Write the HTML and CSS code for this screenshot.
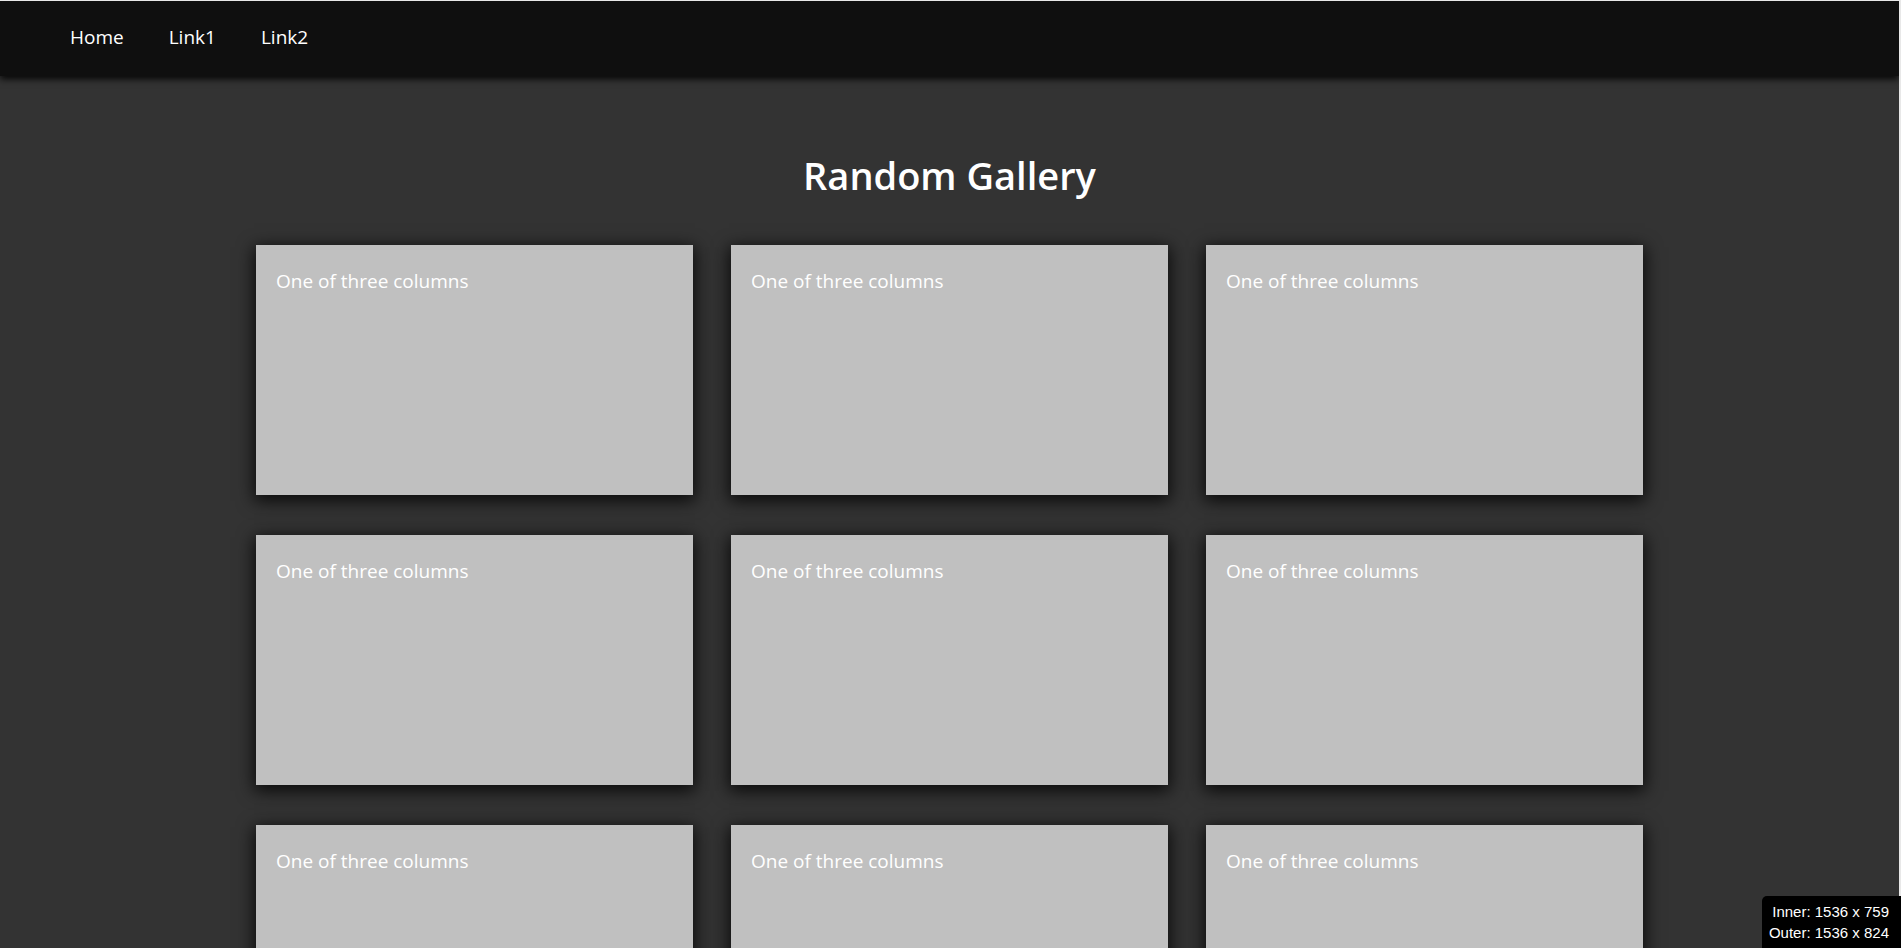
FILE: index.html
```html
<!DOCTYPE html>
<html lang="en">
<head>
<meta charset="utf-8">
<title>Random Gallery</title>
<link rel="stylesheet" href="styles.css">
</head>
<body>
<nav class="navbar">
  <a class="nav-link" href="#">Home</a>
  <a class="nav-link" href="#">Link1</a>
  <a class="nav-link" href="#">Link2</a>
</nav>
<main class="content">
  <h1 class="title">Random Gallery</h1>
  <div class="gallery">
    <div class="card">One of three columns</div>
    <div class="card">One of three columns</div>
    <div class="card">One of three columns</div>
    <div class="card">One of three columns</div>
    <div class="card">One of three columns</div>
    <div class="card">One of three columns</div>
    <div class="card">One of three columns</div>
    <div class="card">One of three columns</div>
    <div class="card">One of three columns</div>
  </div>
</main>
<div class="size-badge">
  <div>Inner: 1536 x 759</div>
  <div>Outer: 1536 x 824</div>
</div>
</body>
</html>
```
FILE: styles.css
```css
html {
  background: #e8e8e8;
  height: 100%;
  overflow: hidden;
}
body {
  margin: 1px 2px 0 0;
  min-height: calc(100% - 1px);
  background: #333333;
  font-family: "Open Sans", "Noto Sans", sans-serif;
  color: #ffffff;
}
.navbar {
  height: 75px;
  background: #0f0f0f;
  display: flex;
  align-items: center;
  padding-left: 47px;
  box-shadow: 0 3px 7px rgba(0, 0, 0, 0.9);
  position: relative;
  z-index: 2;
}
.nav-link {
  color: #ffffff;
  text-decoration: none;
  font-size: 19px;
  padding: 0 22px 0 23px;
  line-height: 26px;
  margin-top: -4px;
}
.content {
  padding-top: 72px;
}
.title {
  margin: 0 0 43px;
  text-align: center;
  font-size: 38px;
  font-weight: 600;
  line-height: 54px;
}
.gallery {
  display: grid;
  grid-template-columns: repeat(3, 437px);
  column-gap: 38px;
  row-gap: 40px;
  justify-content: center;
}
.card {
  height: 250px;
  box-sizing: border-box;
  background: #c0c0c0;
  padding: 23px 20px 20px;
  font-size: 19px;
  line-height: 26px;
  box-shadow: 0 4px 16px 2px rgba(0, 0, 0, 0.8);
}
.size-badge {
  position: fixed;
  right: 0;
  bottom: 0;
  width: 139px;
  box-sizing: border-box;
  background: #000000;
  color: #ffffff;
  border-top-left-radius: 5px;
  font-family: "Liberation Sans", Arial, sans-serif;
  font-size: 15px;
  line-height: 21px;
  text-align: right;
  padding: 5px 12px 5px 0;
  z-index: 5;
}
```
